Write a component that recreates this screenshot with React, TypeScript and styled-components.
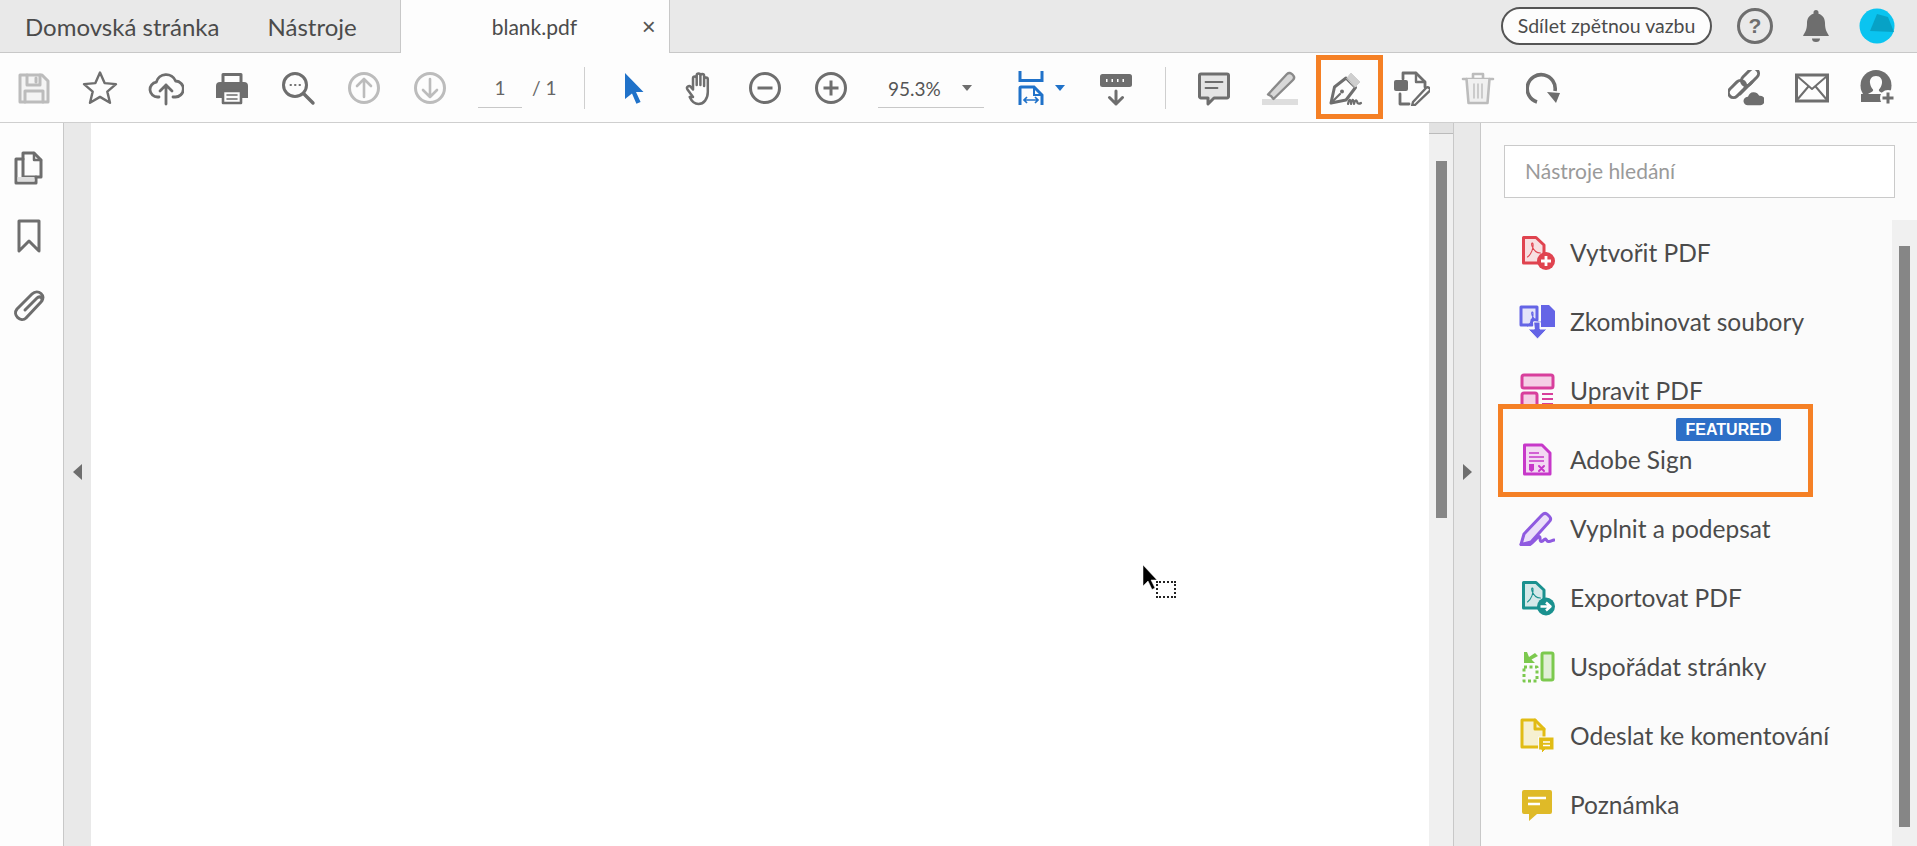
import React from "react";
import styled, { createGlobalStyle } from "styled-components";

const GRAY = "#6e6e6e";
const OFF = "#bcbcbc";
const BLUE = "#2072c9";

const Ico = ({ s = 36, children }: { s?: number; children: React.ReactNode }) => (
	<svg width={s} height={s} viewBox="0 0 36 36" fill="none" strokeLinecap="round" strokeLinejoin="round">
		{children}
	</svg>
);

// toolbar icons
const SaveIcon = () => (
	<Ico>
		<g stroke={OFF} strokeWidth="3">
			<path d="M4 5h22l6 6v21H4z" fill="#f4f4f4" />
			<path d="M11 5v10h13V5M9 32V21h18v11" />
			<path d="M20 8v4" />
		</g>
	</Ico>
);
const StarIcon = () => (
	<Ico>
		<path d="M18 2.5l4.6 10.6 11.4 1-8.7 7.5 2.7 11.2L18 26.9 8 32.8l2.7-11.2L2 14.1l11.4-1z" stroke={GRAY} strokeWidth="2.4" />
	</Ico>
);
const UploadIcon = () => (
	<Ico>
		<g stroke={GRAY} strokeWidth="2.8">
			<path d="M11 27H9.5a7.5 7.5 0 0 1-1.2-14.9A10.2 10.2 0 0 1 27.6 11 8 8 0 0 1 27 27h-2" />
			<path d="M18 34V15M12 21l6-6 6 6" />
		</g>
	</Ico>
);
const PrintIcon = () => (
	<Ico>
		<path d="M9 12V4.5h18V12" stroke={GRAY} strokeWidth="3" />
		<path d="M6 12h24a4 4 0 0 1 4 4v12H2V16a4 4 0 0 1 4-4z" fill={GRAY} />
		<rect x="9" y="21" width="18" height="12" fill="#fdfdfd" stroke={GRAY} strokeWidth="2.6" />
		<path d="M13 25h10M13 29h10" stroke={GRAY} strokeWidth="1.6" />
	</Ico>
);
const SearchIcon = () => (
	<Ico>
		<circle cx="15" cy="15" r="11.5" stroke={GRAY} strokeWidth="3" />
		<path d="M24 24l9 9" stroke={GRAY} strokeWidth="3.4" />
		<path d="M10.5 15h.5M15 15h.5M19.5 15h.5" stroke={GRAY} strokeWidth="2" />
	</Ico>
);
const CircleUp = ({ down }: { down?: boolean }) => (
	<Ico>
		<circle cx="18" cy="18" r="14.5" stroke={OFF} strokeWidth="3" />
		<path d={down ? "M18 9v18M11 20l7 7 7-7" : "M18 27V9M11 16l7-7 7 7"} stroke={OFF} strokeWidth="2.6" />
	</Ico>
);
const PointerIcon = () => (
	<Ico>
		<path d="M10 3l18.5 19H21l4.6 10-4.2 1.8L17 23.5 10 29z" fill={BLUE} />
	</Ico>
);
const HandIcon = () => (
	<Ico>
		<path
			d="M12 27L6.500 19.5c-1.600-2.300 1.400-4.600 3.300-2.600L12 19.500V8.500c0-2.700 3.700-2.700 3.700 0V15V5.500c0-2.700 3.700-2.700 3.700 0V15V6c0-2.700 3.700-2.700 3.700 0V16V9.500c0-2.700 3.700-2.700 3.700 0V22c0 7-4 12-9.300 12-4.500 0-6.800-2.500-8.800-7z"
			stroke={GRAY}
			strokeWidth="2.5"
		/>
	</Ico>
);
const CircleSign = ({ plus }: { plus?: boolean }) => (
	<Ico>
		<circle cx="18" cy="18" r="14.5" stroke={GRAY} strokeWidth="3" />
		<path d={plus ? "M10.500 18h15M18 10.500v15" : "M10.500 18h15"} stroke={GRAY} strokeWidth="3" strokeLinecap="butt" />
	</Ico>
);
const FitIcon = () => (
	<Ico>
		<g stroke={BLUE} strokeWidth="3" strokeLinecap="butt" strokeLinejoin="miter">
			<path d="M7 1v9.500h22V1" />
			<path d="M7 35V18a1 1 0 0 1 1-1h13l8 8v10" />
			<path d="M21 17v8h8" strokeWidth="2" />
			<path d="M11 30h14M14 27l-3 3 3 3M22 27l3 3-3 3" strokeWidth="1.700" />
		</g>
	</Ico>
);
const ReadIcon = () => (
	<Ico>
		<rect x="2" y="4" width="32" height="13" rx="2.500" fill={GRAY} />
		<path d="M8 10.500h1.500M13.500 10.500h1.500M19 10.500h1.500M24.500 10.500h1.500" stroke="#fff" strokeWidth="3" strokeLinecap="butt" />
		<path d="M18 21v13M11.500 27.500l6.500 6.500 6.500-6.500" stroke={GRAY} strokeWidth="3" />
	</Ico>
);
const CommentIcon = () => (
	<Ico>
		<path d="M5 4h26a1.500 1.500 0 0 1 1.500 1.500v21a1.500 1.500 0 0 1-1.500 1.500H18l-6 6v-6H5a1.500 1.500 0 0 1-1.500-1.500v-21A1.500 1.500 0 0 1 5 4z" fill="#e4e4e4" stroke={GRAY} strokeWidth="3" />
		<path d="M9.500 12h17M9.500 18h12" stroke={GRAY} strokeWidth="1.800" />
	</Ico>
);
const HighlightIcon = () => (
	<Ico>
		<rect x="0" y="29" width="36" height="6" fill="#dedede" />
		<path d="M9 26l-3-1.500L25 4c2-2 4-1 5.500.5S33 8 31 10L11.500 29z" fill="#d8d8d8" stroke="#8a8a8a" strokeWidth="2.400" />
	</Ico>
);
const SignIcon = () => (
	<Ico>
		<path d="M3 33l3.500-16L18 8l9.500 9.500L18 30z" stroke={GRAY} strokeWidth="3" fill="#fdfdfd" />
		<path d="M19 8l4-5 9 9-5 5z" fill="#cfcfcf" stroke="#cfcfcf" />
		<path d="M3 33l9-9" stroke={GRAY} strokeWidth="2.200" />
		<circle cx="14" cy="21.500" r="2" fill={GRAY} />
		<path d="M20 34c1-5 2.500-6 3 0 1-5 2.500-6 3 0 1-4 2.500-5 3.500-1 1 1 2 1 3.500 0" stroke={GRAY} strokeWidth="2.200" />
	</Ico>
);
const ShareIcon = () => (
	<Ico>
		<path d="M9 9V3h13l9 9v5" stroke={GRAY} strokeWidth="2.800" />
		<path d="M22 3v9h9" stroke={GRAY} strokeWidth="2.400" />
		<rect x="0" y="10" width="14" height="11" rx="2" fill={GRAY} />
		<path d="M6 24v10h9" stroke={GRAY} strokeWidth="2.800" />
		<path d="M21 35l-3 1 1-4 13-14c2-2 5.500 1 3.500 3z" stroke={GRAY} strokeWidth="2.400" />
	</Ico>
);
const TrashIcon = () => (
	<Ico>
		<g stroke={OFF} strokeWidth="2.600">
			<path d="M3 9h30M13 9V4h10v5" />
			<path d="M6.500 9l2 24h19l2-24" fill="#f0f0f0" />
			<path d="M14 14v14M18 14v14M22 14v14" strokeWidth="1.400" />
		</g>
	</Ico>
);
const RotateIcon = () => (
	<Ico>
		<path d="M11 32A14 14 0 1 1 29 21" stroke={GRAY} strokeWidth="3.600" strokeLinecap="butt" />
		<path d="M21 22l13 1-4 10z" fill={GRAY} />
	</Ico>
);
const LinkIcon = () => (
	<Ico>
		<g stroke={GRAY} strokeWidth="3">
			<rect x="17" y="-3" width="10" height="20" rx="5" transform="rotate(45 22 7)" />
			<rect x="4" y="9" width="10" height="20" rx="5" transform="rotate(45 9 19)" />
			<path d="M12 24l12-12" />
		</g>
		<path d="M20 36a5 5 0 0 1-.5-10 6.500 6.500 0 0 1 12-1 5.500 5.500 0 0 1 1 11z" fill={GRAY} stroke="#fdfdfd" strokeWidth="1.500" />
	</Ico>
);
const MailIcon = () => (
	<Ico>
		<rect x="2.500" y="5" width="31" height="26" stroke={GRAY} strokeWidth="3" strokeLinejoin="miter" />
		<path d="M3 6l15 13L33 6M3 30l11-13M33 30L22 17" stroke={GRAY} strokeWidth="2" />
	</Ico>
);
const UserIcon = () => (
	<Ico>
		<circle cx="16" cy="15.500" r="15.500" fill={GRAY} />
		<path d="M16 6c-4.500 0-6.500 3.500-6 7 .4 3 1.500 5 3 6.500 1 2-3 3-5 4.500h16c-2-1.500-6-2.500-5-4.500 1.500-1.500 2.600-3.500 3-6.500.5-3.500-1.500-7-6-7z" fill="#fdfdfd" />
		<rect x="1" y="24" width="30" height="8" fill={GRAY} />
		<circle cx="28" cy="28" r="8" fill="#fdfdfd" />
		<path d="M28 22.500v11M22.500 28h11" stroke={GRAY} strokeWidth="3" strokeLinecap="butt" />
	</Ico>
);
const BellIcon = () => (
	<Ico>
		<path d="M18 2a2.500 2.500 0 0 1 2.500 2.500v1.300C25 7 27 11 27 15c0 7 2 9 4 13H5c2-4 4-6 4-13 0-4 2-8 6.500-9.200V4.500A2.500 2.500 0 0 1 18 2z" fill={GRAY} />
		<path d="M14 30.500h8a4 3.500 0 0 1-8 0z" fill={GRAY} />
	</Ico>
);
const AvatarIcon = () => (
	<Ico>
		<circle cx="18" cy="18" r="17.500" fill="#0ac4f0" />
		<path d="M18 6l11 3 6 15-24-1z" fill="#07a2c6" />
	</Ico>
);

// left rail
const PagesIcon = () => (
	<Ico>
		<path d="M12 4h11l7 7v17H12z" stroke={GRAY} strokeWidth="3" />
		<path d="M23 4v7h7" stroke={GRAY} strokeWidth="2.500" />
		<path d="M12 10H5v24h20v-6" stroke={GRAY} strokeWidth="3" />
		<rect x="6.500" y="28" width="17" height="4.500" fill="#dedede" />
	</Ico>
);
const BookmarkIcon = () => (
	<Ico>
		<path d="M8 3h20v30l-10-10-10 10z" stroke={GRAY} strokeWidth="3" strokeLinejoin="round" />
	</Ico>
);
const ClipIcon = () => (
	<Ico>
		<path d="M14 23l12-12c3-3 7 1 4 4L15 31c-5 5-14-3-9-9L21 7c6-6 15 2 9 8" stroke={GRAY} strokeWidth="3" />
	</Ico>
);

// tools panel
const AcroGlyph = ({ c }: { c: string }) => (
	<path d="M8.500 22c4-3 6-9 5.500-13-.5-2-2-1-1 2 1.500 4 4 7 8.500 7" stroke={c} strokeWidth="1.100" />
);
const CreatePdfIcon = () => (
	<Ico>
		<path d="M4.500 2.500H17L25 10v18H4.500z" fill="#f7dfe1" stroke="#e0434f" strokeWidth="3" />
		<AcroGlyph c="#e0434f" />
		<circle cx="27" cy="26" r="9" fill="#e0434f" />
		<path d="M22 26h10M27 21v10" stroke="#fff" strokeWidth="2.800" strokeLinecap="butt" />
	</Ico>
);
const CombineIcon = () => (
	<Ico>
		<path d="M2 3h16v13l-5 0v5H2z" fill="#e3e3f9" stroke="#6464e6" strokeWidth="3" />
		<AcroGlyph c="#6464e6" />
		<path d="M22 1h8l6 6v16H22z" fill="#6464e6" />
		<path d="M15 18h6v7h7l-9.500 10L9 25h6z" fill="#6464e6" stroke="#fbfbfb" strokeWidth="1" />
	</Ico>
);
const EditPdfIcon = () => (
	<Ico>
		<rect x="3" y="2" width="31" height="13" rx="2" fill="#f5cfe6" stroke="#d83f9c" strokeWidth="3" />
		<rect x="3" y="20" width="15" height="14" rx="2" fill="#f5cfe6" stroke="#d83f9c" strokeWidth="3" />
		<path d="M23 21h11M23 26h11M23 31h11" stroke="#d83f9c" strokeWidth="1.800" strokeLinecap="butt" />
	</Ico>
);
const AdobeSignIcon = () => (
	<Ico>
		<path d="M5.500 3H23l8 8v21H5.500z" fill="#f3d9f3" stroke="#c738c9" strokeWidth="3" />
		<path d="M10 11h10M10 15h15M10 19h15" stroke="#c738c9" strokeWidth="1.500" strokeLinecap="butt" />
		<path d="M10 22h5v6l-2.500 2-2.500-2z" fill="#c738c9" />
		<path d="M20 24l5 5M25 24l-5 5" stroke="#c738c9" strokeWidth="2" />
	</Ico>
);
const FillSignIcon = () => (
	<Ico>
		<path d="M2 33.500l3-10.500L23 4c2-2 4-2 5.500-.5l2 2c1.500 1.500 1.500 3.500-.5 5.500L12 31z" fill="#ebdff9" stroke="#8f5ae0" strokeWidth="3" />
		<path d="M2 33.500h9c3-2 7-7 9-8 2-.5 0 5 2.500 5 2 0 2.500-3 4-2.500 1.500 1 1.500 3 3.500 2.500 2 0 3-1 5-1.500" stroke="#8f5ae0" strokeWidth="3" />
	</Ico>
);
const ExportIcon = () => (
	<Ico>
		<path d="M4.500 2.500H17L25 10v18H4.500z" fill="#d5e9e9" stroke="#1a918f" strokeWidth="3" />
		<AcroGlyph c="#1a918f" />
		<circle cx="27" cy="26.500" r="9" fill="#1a918f" />
		<path d="M21.500 26.500h8M27 22.500l4.500 4-4.500 4" stroke="#fff" strokeWidth="2.500" strokeLinecap="butt" />
	</Ico>
);
const OrganizeIcon = () => (
	<Ico>
		<rect x="23" y="4" width="11" height="27" rx="1.500" fill="#e0efd6" stroke="#7cc94e" strokeWidth="3" />
		<path d="M5 18H18V32H5z" stroke="#7cc94e" strokeWidth="3" strokeDasharray="3 2.500" strokeLinecap="butt" />
		<path d="M5 3v11h11l-3.500-3.500L19 7l-3-3-6 4-2-5z" fill="#7cc94e" />
	</Ico>
);
const SendCommentIcon = () => (
	<Ico>
		<path d="M3 2h13l9 9v18H3z" fill="#f6f0d0" stroke="#e1bc14" strokeWidth="3" />
		<path d="M16 2v9h9" stroke="#e1bc14" strokeWidth="3" />
		<path d="M20 19h15v13h-9l-3.500 3.500V32H20z" fill="#e1bc14" stroke="#fbfbfb" />
		<path d="M24 24h7M24 27.500h7" stroke="#fff" strokeWidth="1.500" strokeLinecap="butt" />
	</Ico>
);
const NoteIcon = () => (
	<Ico>
		<path d="M5 3h26a2 2 0 0 1 2 2v20a2 2 0 0 1-2 2H18l-8 7v-7H5a2 2 0 0 1-2-2V5a2 2 0 0 1 2-2z" fill="#dfba28" />
		<path d="M9 11h18M9 17h12" stroke="#fff" strokeWidth="2.400" strokeLinecap="butt" />
	</Ico>
);

const leftTools = [
	{ icon: <SaveIcon />, label: "Uložit" },
	{ icon: <StarIcon />, label: "Oblíbené" },
	{ icon: <UploadIcon />, label: "Nahrát" },
	{ icon: <PrintIcon />, label: "Tisk" },
	{ icon: <SearchIcon />, label: "Hledat" },
	{ icon: <CircleUp />, label: "Předchozí" },
	{ icon: <CircleUp down />, label: "Další" },
];

const panelTools = [
	{ icon: <CreatePdfIcon />, name: "Vytvořit PDF" },
	{ icon: <CombineIcon />, name: "Zkombinovat soubory" },
	{ icon: <EditPdfIcon />, name: "Upravit PDF" },
	{ icon: <AdobeSignIcon />, name: "Adobe Sign", featured: true },
	{ icon: <FillSignIcon />, name: "Vyplnit a podepsat" },
	{ icon: <ExportIcon />, name: "Exportovat PDF" },
	{ icon: <OrganizeIcon />, name: "Uspořádat stránky" },
	{ icon: <SendCommentIcon />, name: "Odeslat ke komentování" },
	{ icon: <NoteIcon />, name: "Poznámka" },
];

export default function App() {
	return (
		<>
			<GlobalStyle />
			<Root>
				<TabBar>
					<Tab>Domovská stránka</Tab>
					<Tab>Nástroje</Tab>
					<ActiveTab>
						blank.pdf
						<CloseMark>×</CloseMark>
					</ActiveTab>
					<TabActions>
						<FeedbackButton>Sdílet zpětnou vazbu</FeedbackButton>
						<HelpBadge>?</HelpBadge>
						<BellIcon />
						<AvatarIcon />
					</TabActions>
				</TabBar>

				<Toolbar>
					{leftTools.map((t) => (
						<ToolButton key={t.label} title={t.label}>
							{t.icon}
						</ToolButton>
					))}
					<PageField>
						<PageInput>1</PageInput>
						<span>/ 1</span>
					</PageField>
					<Divider />
					<ToolButton>
						<PointerIcon />
					</ToolButton>
					<ToolButton>
						<HandIcon />
					</ToolButton>
					<ToolButton>
						<CircleSign />
					</ToolButton>
					<ToolButton>
						<CircleSign plus />
					</ToolButton>
					<ZoomSelect>
						95.3%
						<Caret />
					</ZoomSelect>
					<FitButton>
						<FitIcon />
						<Caret $blue />
					</FitButton>
					<ToolButton>
						<ReadIcon />
					</ToolButton>
					<Divider />
					<ToolButton>
						<CommentIcon />
					</ToolButton>
					<ToolButton>
						<HighlightIcon />
					</ToolButton>
					<ToolButton $marked>
						<SignIcon />
					</ToolButton>
					<ToolButton>
						<ShareIcon />
					</ToolButton>
					<ToolButton>
						<TrashIcon />
					</ToolButton>
					<ToolButton>
						<RotateIcon />
					</ToolButton>
					<ToolbarEnd>
						<ToolButton>
							<LinkIcon />
						</ToolButton>
						<ToolButton>
							<MailIcon />
						</ToolButton>
						<ToolButton>
							<UserIcon />
						</ToolButton>
					</ToolbarEnd>
				</Toolbar>

				<Body>
					<LeftRail>
						<PagesIcon />
						<BookmarkIcon />
						<ClipIcon />
					</LeftRail>
					<CollapseStrip>
						<Arrow $left />
					</CollapseStrip>
					<PageArea>
						<CursorMark>
							<svg width="16" height="26" viewBox="0 0 16 26">
								<path d="M1 1l14 15H9l4 8-3 1.500L6 17l-5 5z" fill="#000" stroke="#fff" strokeWidth="0.500" />
							</svg>
							<DragBox />
						</CursorMark>
					</PageArea>
					<PageScroll>
						<ScrollHandle />
						<PageThumb />
					</PageScroll>
					<CollapseStrip>
						<Arrow />
					</CollapseStrip>
					<ToolsPanel>
						<SearchBox>Nástroje hledání</SearchBox>
						<ListWrap>
							<ToolList>
								{panelTools.map((t) => (
									<ToolRow key={t.name}>
										{t.featured && <MarkBox />}
										{t.featured && <FeaturedBadge>FEATURED</FeaturedBadge>}
										<RowIcon>{t.icon}</RowIcon>
										<RowName>{t.name}</RowName>
									</ToolRow>
								))}
							</ToolList>
							<ListTrack>
								<ListThumb />
							</ListTrack>
						</ListWrap>
					</ToolsPanel>
				</Body>
			</Root>
		</>
	);
}

const GlobalStyle = createGlobalStyle`
	html, body {
		margin: 0;
		padding: 0;
		height: 100%;
		overflow: hidden;
	}
	#root {
		height: 100%;
	}
	* {
		box-sizing: border-box;
	}
`;

const Root = styled.div`
	display: flex;
	flex-direction: column;
	width: 1917px;
	height: 846px;
	overflow: hidden;
	background: #fdfdfd;
	color: #4b4b4b;
	font-family: Lato, "Noto Sans", sans-serif;
`;
const TabBar = styled.div`
	display: flex;
	align-items: center;
	flex: none;
	height: 53px;
	background: #e9e9e9;
	border-bottom: 1px solid #c8c8c8;
`;
const Tab = styled.div`
	font-size: 24px;
	margin-left: 25px;
	margin-right: 23px;
	white-space: nowrap;
`;
const ActiveTab = styled.div`
	display: flex;
	align-items: center;
	align-self: stretch;
	flex: none;
	width: 270px;
	height: 53px;
	margin-left: 20px;
	padding: 0 13px 0 91px;
	background: #fdfdfd;
	border-left: 1px solid #c8c8c8;
	border-right: 1px solid #c8c8c8;
	font-size: 21px;
`;
const CloseMark = styled.span`
	margin-left: auto;
	font-size: 24px;
	font-family: "Liberation Sans", sans-serif;
	color: #555;
`;
const TabActions = styled.div`
	display: flex;
	align-items: center;
	gap: 25px;
	margin-left: auto;
	padding-right: 22px;
`;
const FeedbackButton = styled.div`
	width: 211px;
	height: 38px;
	border: 2px solid #555;
	border-radius: 19px;
	background: #fdfdfd;
	font-size: 19.5px;
	line-height: 34px;
	text-align: center;
`;
const HelpBadge = styled.div`
	width: 36px;
	height: 36px;
	border: 3px solid ${GRAY};
	border-radius: 50%;
	color: ${GRAY};
	font-family: "Liberation Sans", sans-serif;
	font-weight: 700;
	font-size: 21px;
	line-height: 30px;
	text-align: center;
`;
const Toolbar = styled.div`
	display: flex;
	align-items: center;
	flex: none;
	height: 70px;
	padding: 0 6px 0 1px;
	background: #fdfdfd;
	border-bottom: 1px solid #cfcfcf;
`;
const ToolButton = styled.div<{ $marked?: boolean }>`
	position: relative;
	display: flex;
	align-items: center;
	justify-content: center;
	flex: none;
	width: 66px;
	height: 100%;
	${(p) =>
		p.$marked &&
		`&::after {
			content: "";
			position: absolute;
			left: 3px;
			right: -4px;
			top: 2px;
			bottom: 3px;
			border: 5px solid #f58025;
		}`}
`;
const PageField = styled.div`
	display: flex;
	align-items: center;
	gap: 10px;
	width: 90px;
	margin-left: 15px;
	font-size: 19px;
	color: #666;
`;
const PageInput = styled.div`
	width: 44px;
	height: 38px;
	margin-top: 2px;
	line-height: 36px;
	text-align: center;
	border-bottom: 1px solid #c8c8c8;
`;
const Divider = styled.div`
	flex: none;
	width: 1px;
	height: 42px;
	margin: 0 15px 0 16px;
	background: #cfcfcf;
`;
const ZoomSelect = styled.div`
	display: flex;
	align-items: center;
	flex: none;
	width: 106px;
	height: 38px;
	margin: 2px 0 0 14px;
	padding: 0 12px 0 10px;
	justify-content: space-between;
	border-bottom: 1px solid #c8c8c8;
	font-size: 19px;
	color: #555;
`;
const Caret = styled.span<{ $blue?: boolean }>`
	width: 0;
	height: 0;
	border-left: 5px solid transparent;
	border-right: 5px solid transparent;
	border-top: 6px solid ${(p) => (p.$blue ? BLUE : GRAY)};
`;
const FitButton = styled.div`
	display: flex;
	align-items: center;
	flex: none;
	width: 99px;
	padding-left: 29px;
	gap: 6px;
`;
const ToolbarEnd = styled.div`
	display: flex;
	align-self: stretch;
	margin-left: auto;
`;
const Body = styled.div`
	display: flex;
	flex: 1;
	min-height: 0;
`;
const LeftRail = styled.div`
	display: flex;
	flex-direction: column;
	align-items: center;
	flex: none;
	gap: 33px;
	width: 64px;
	padding: 26px 5px 0 0;
	background: #fdfdfd;
	border-right: 1px solid #c8c8c8;
`;
const CollapseStrip = styled.div`
	display: flex;
	align-items: center;
	justify-content: center;
	flex: none;
	width: 27px;
	padding-bottom: 26px;
	background: #e9e9e9;
	border-right: 1px solid #c8c8c8;
	&:nth-child(2) {
		border-right: none;
	}
`;
const Arrow = styled.span<{ $left?: boolean }>`
	width: 0;
	height: 0;
	border-top: 8px solid transparent;
	border-bottom: 8px solid transparent;
	${(p) => (p.$left ? `border-right: 9px solid ${GRAY};` : `border-left: 9px solid ${GRAY};`)}
`;
const PageArea = styled.div`
	position: relative;
	flex: 1;
	background: #fff;
`;
const CursorMark = styled.div`
	position: absolute;
	left: 1051px;
	top: 441px;
	display: flex;
`;
const DragBox = styled.div`
	width: 20px;
	height: 17px;
	margin: 17px 0 0 -2px;
	border: 2px dotted #222;
`;
const PageScroll = styled.div`
	position: relative;
	flex: none;
	width: 25px;
	background: #f0f0f0;
	border-right: 1px solid #c8c8c8;
`;
const ScrollHandle = styled.div`
	height: 11px;
	background: #e2e2e2;
	border-bottom: 1px solid #bbb;
`;
const PageThumb = styled.div`
	width: 11px;
	height: 357px;
	margin: 27px 0 0 7px;
	background: #868686;
`;
const ToolsPanel = styled.div`
	display: flex;
	flex-direction: column;
	flex: none;
	width: 436px;
	padding-top: 22px;
	background: #fbfbfb;
`;
const SearchBox = styled.div`
	flex: none;
	width: 391px;
	height: 53px;
	margin-left: 23px;
	padding-left: 20px;
	border: 1px solid #cacaca;
	background: #fff;
	font-size: 21px;
	line-height: 50px;
	color: #9a9a9a;
`;
const ListWrap = styled.div`
	display: flex;
	flex: 1;
	min-height: 0;
	margin-top: 20px;
`;
const ToolList = styled.div`
	flex: 1;
	min-width: 0;
`;
const ToolRow = styled.div`
	position: relative;
	display: flex;
	align-items: center;
	gap: 15px;
	height: 69px;
	padding-left: 38px;
`;
const MarkBox = styled.div`
	position: absolute;
	left: 17px;
	top: -21px;
	width: 315px;
	height: 93px;
	border: 5px solid #f58025;
	background: #fbfbfb;
`;
const FeaturedBadge = styled.div`
	position: absolute;
	left: 195px;
	top: -7px;
	width: 105px;
	height: 23px;
	border-radius: 2px;
	background: #2d6fc7;
	color: #fff;
	font-family: "Liberation Sans", sans-serif;
	font-weight: 700;
	font-size: 16px;
	line-height: 23px;
	text-align: center;
`;
const RowIcon = styled.div`
	position: relative;
	display: flex;
	flex: none;
`;
const RowName = styled.div`
	position: relative;
	font-size: 24.5px;
	white-space: nowrap;
`;
const ListTrack = styled.div`
	flex: none;
	width: 25px;
	margin-top: 2px;
	padding: 26px 0 0 7px;
	background: #f0f0f0;
`;
const ListThumb = styled.div`
	width: 11px;
	height: 581px;
	background: #868686;
`;
